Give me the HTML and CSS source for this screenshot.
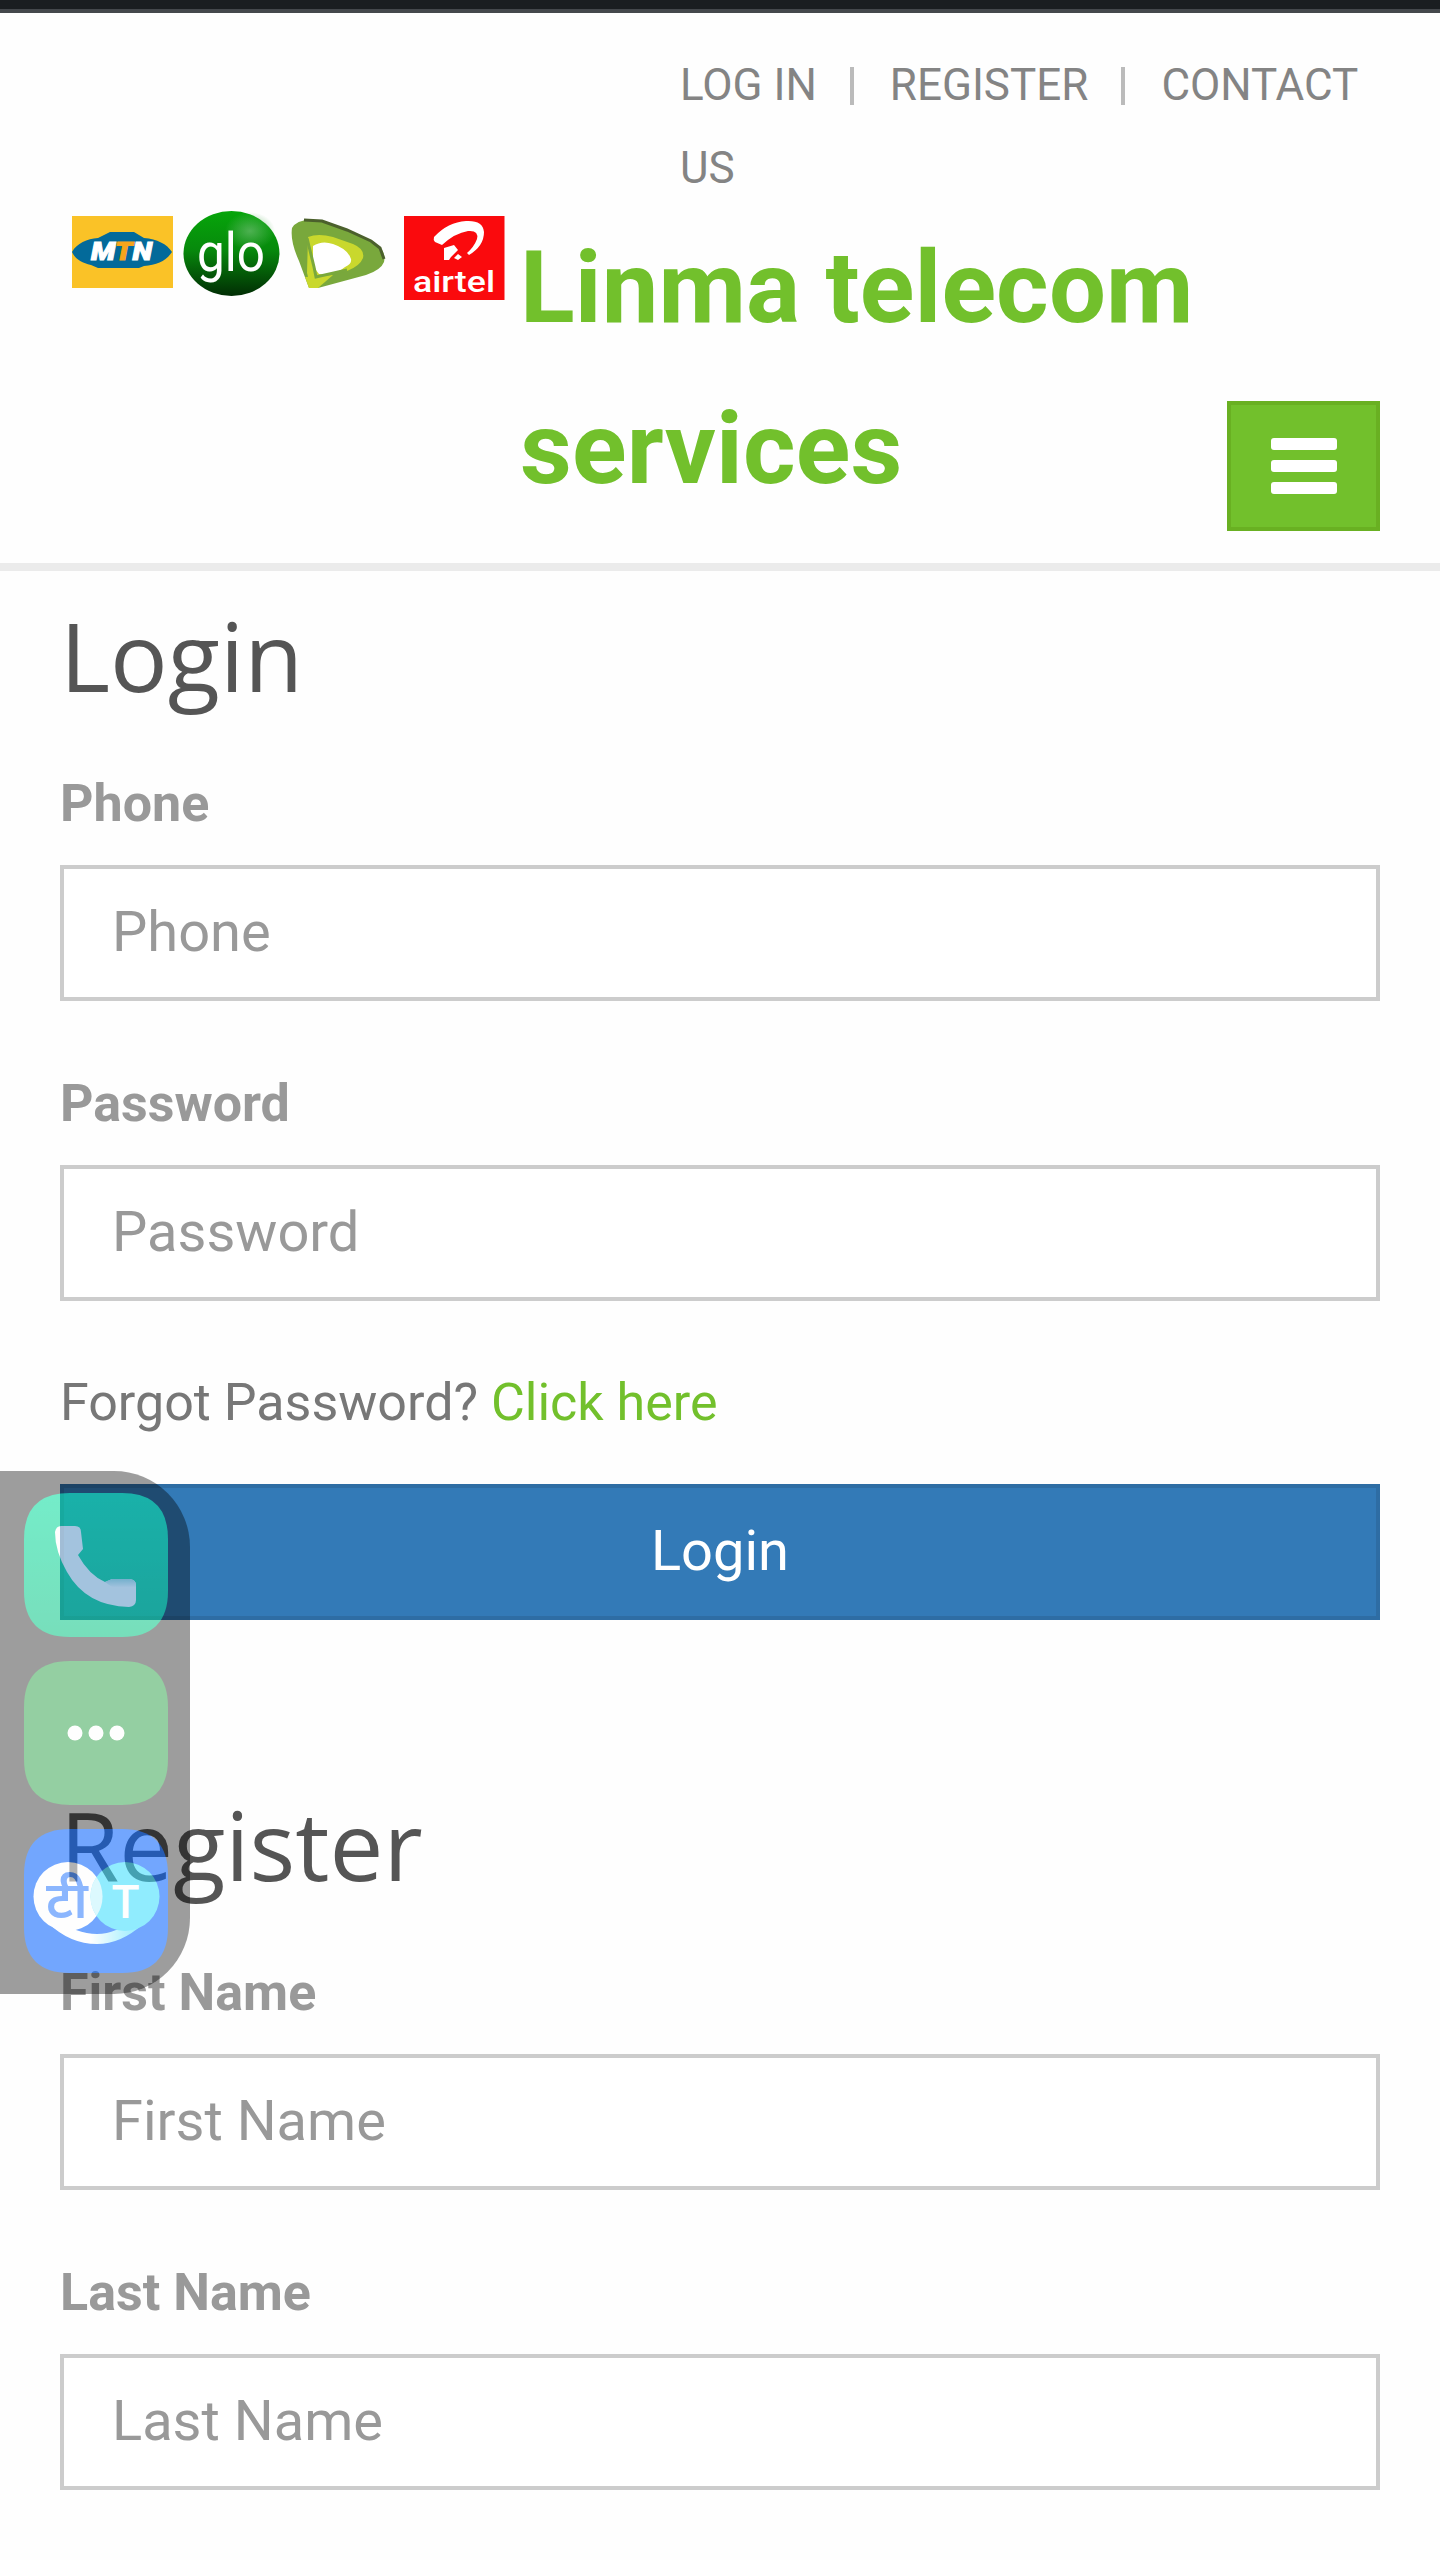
FILE: index.html
```html
<!DOCTYPE html>
<html lang="en">
<head>
<meta charset="utf-8">
<title>Linma telecom services</title>
<link rel="stylesheet" href="styles.css">
</head>
<body>
<div class="status-strip"></div>
<header class="header">
  <nav class="top-links"><a>LOG IN</a><span class="sep"></span><a>REGISTER</a><span class="sep"></span><a>CONTACT US</a></nav>
  <div class="brand-row">
    <svg class="logos" viewBox="60 208 460 100" aria-label="MTN glo etisalat airtel">
      <defs>
        <linearGradient id="glo" x1="0" y1="0" x2="0" y2="1"><stop offset="0" stop-color="#06a50a"/><stop offset=".45" stop-color="#078a0c"/><stop offset="1" stop-color="#012d04"/></linearGradient>
        <radialGradient id="shine"><stop offset="0" stop-color="#5fb763" stop-opacity=".8"/><stop offset="1" stop-color="#5fb763" stop-opacity="0"/></radialGradient>
      </defs>
      <rect x="72" y="216" width="101" height="72" fill="#fac227"/>
      <path d="M72 252c5-9 15-13 26-14l12-6h24l10 6c13 1 23 6 28 14-6 9-15 13-28 14l-5 2H98l-7-3c-9-2-16-6-19-13z" fill="#036a9a"/>
      <text class="mtn" x="91" y="260" textLength="61" lengthAdjust="spacingAndGlyphs">M<tspan fill="#f5a51c">T</tspan>N</text>
      <ellipse cx="231.500" cy="253.500" rx="48" ry="42.500" fill="url(#glo)"/>
      <ellipse cx="250" cy="231" rx="25" ry="19" fill="url(#shine)"/>
      <text class="glo" x="197" y="271" textLength="68" lengthAdjust="spacingAndGlyphs">glo</text>
      <path d="M292 228q5-9 21-8l14 3 31 11 20 12q8 6 6 16-3 8-18 13l-48 13h-9l-10-27q-9-20-7-33z" fill="#79a83c"/>
      <path d="M304 220l18 1 25 9 24 11 9 7 4 11" fill="none" stroke="#4b602c" stroke-width="3"/>
      <path d="M308 237q10-4 25 0l20 7q12 5 10 14-3 8-16 13l-20 3-9 14h-7l-4-15z" fill="#c9d82d"/>
      <path d="M305 277l28-2-15 13h-9z" fill="#c9d82d"/>
      <path d="M313 246q9-6 20-2 15 5 18 15 1 5-6 8-10 9-26 7-6-7-6-14z" fill="#fff"/>
      <path d="M307 238l7 29 2 10 31-7" fill="none" stroke="#79a83c" stroke-width="3"/>
      <rect x="404" y="216" width="100.500" height="84" fill="#fa0a0d"/>
      <path d="M435 242l7 3q13-12 26-14 11-1 9 8-3 8-10 14l2 2q15-9 15-23-1-12-18-11-18 1-32 16-1 3 1 5z" fill="#fff"/>
      <path d="M444 248l10-3 4 5-7 7-2 3h-5z M458 254l4 3-4 3-4-2z" fill="#fff"/>
      <text class="airtel" x="413" y="292" textLength="82" lengthAdjust="spacingAndGlyphs">airtel</text>
    </svg>
    <div class="brand">Linma telecom services</div>
    <button class="menu" aria-label="Menu"><i></i><i></i><i></i></button>
  </div>
</header>
<main class="main">
  <section>
    <h1>Login</h1>
    <label>Phone</label>
    <input type="text" placeholder="Phone">
    <label>Password</label>
    <input type="text" placeholder="Password">
    <p class="forgot">Forgot Password? <a>Click here</a></p>
    <button class="submit">Login</button>
  </section>
  <section class="register">
    <h1>Register</h1>
    <label>First Name</label>
    <input type="text" placeholder="First Name">
    <label>Last Name</label>
    <input type="text" placeholder="Last Name">
  </section>
</main>
<aside class="dock">
  <svg class="app" viewBox="0 0 144 144">
    <defs>
      <linearGradient id="call" x1="0" y1="0" x2="0" y2="1"><stop offset="0" stop-color="#05df9f"/><stop offset="1" stop-color="#0ac585"/></linearGradient>
      <linearGradient id="ear" x1="0" y1="0" x2="0" y2="1"><stop offset="0" stop-color="#a8dcdf"/><stop offset=".6" stop-color="#fff"/></linearGradient>
    </defs>
    <path d="M0 46Q0 0 46 0h52q46 0 46 46v52q0 46-46 46H46Q0 144 0 98z" fill="url(#call)"/>
    <path d="M54 62q11 20 27 27l7-3h18q6 1 6 6v15q0 6-7 7-43-1-62-35Q31 58 31 39q1-6 6-6h14q6 0 6 6l2 17z" fill="#fff"/>
    <path d="M81 89l7-3h18q6 1 6 6v8q-20-1-31-11z" fill="url(#ear)"/>
  </svg>
  <svg class="app" viewBox="0 0 144 144">
    <path d="M0 46Q0 0 46 0h52q46 0 46 46v52q0 46-46 46H46Q0 144 0 98z" fill="#3fa957"/>
    <g fill="#fff"><circle cx="51" cy="72" r="7.500"/><circle cx="72" cy="72" r="7.500"/><circle cx="93" cy="72" r="7.500"/></g>
  </svg>
  <svg class="app" viewBox="0 0 144 144">
    <defs><linearGradient id="swoosh"><stop offset="0" stop-color="#fff"/><stop offset=".45" stop-color="#fff"/><stop offset="1" stop-color="#38deff"/></linearGradient></defs>
    <path d="M0 46Q0 0 46 0h52q46 0 46 46v52q0 46-46 46H46Q0 144 0 98z" fill="#0060ff"/>
    <path d="M24 94q22 21 49 21 24 0 46-20l-27 6q-18 8-40 0z" fill="url(#swoosh)"/>
    <circle cx="44" cy="67.500" r="34.500" fill="#fff"/>
    <circle cx="101" cy="67.500" r="34.500" fill="#38deff"/>
    <path d="M72.500 48a34.500 34.500 0 0 1 0 39 34.500 34.500 0 0 1 0-39z" fill="#c2f5ff"/>
    <text class="hindi" x="43" y="89">टी</text>
    <text class="latin" x="101.500" y="89">T</text>
  </svg>
</aside>
</body>
</html>
```
FILE: styles.css
```css
* { box-sizing: border-box; }
body { margin: 0; height: 2560px; overflow: hidden; position: relative; background: #fefefe; font-family: Roboto, sans-serif; color: #777; }
.status-strip { height: 13px; background: #1a1e21; border-bottom: 4px solid #44484c; }
.header { height: 558px; border-bottom: 8px solid #ebebeb; padding-top: 31px; }
.top-links { margin: 0 60px 0 680px; height: 164px; font-size: 44px; line-height: 83px; color: #848484; }
.sep { display: inline-block; width: 4px; height: 38px; background: #bbb; margin: 0 36px 0 33px; vertical-align: -5px; }
.brand-row { display: flex; align-items: flex-start; padding: 0 60px; height: 323px; }
.logos { flex: none; width: 460px; height: 100px; }
.brand { flex: 1; font-size: 101px; font-weight: 700; line-height: 161px; letter-spacing: .15px; margin-top: -1px; color: #72c02c; }
.menu { align-self: flex-end; width: 153px; height: 130px; padding: 0; border: 4px solid #69b022; background: #72c02c; display: flex; flex-direction: column; gap: 10px; align-items: center; justify-content: center; }
.menu i { width: 66px; height: 12px; background: #fff; border-radius: 3px; }
.main { padding: 31px 60px 0; }
h1 { margin: 0 0 56px; font: 400 96px/106px "Open Sans", sans-serif; color: #555; }
label { display: block; font-size: 52px; font-weight: 700; line-height: 80px; color: #999; margin-bottom: 21px; }
input { display: block; width: 100%; height: 136px; border: 4px solid #ccc; padding: 0 48px 2px; margin: 0 0 63px; background: #fff; font: 56px Roboto, sans-serif; }
input::placeholder { color: #999; opacity: 1; }
.forgot { margin: -1px 0 41px; font-size: 52px; line-height: 80px; }
.forgot a { color: #72c02c; }
.submit { display: block; width: 100%; height: 136px; padding: 0 0 2px; border: 4px solid #2e6da4; background: #337ab7; color: #fff; font: 56px Roboto, sans-serif; }
.register { margin-top: 171px; }
.dock { position: absolute; left: 0; top: 1471px; width: 190px; height: 523px; padding: 22px 0 0 24px; border-radius: 0 76px 76px 0; background: rgba(0,0,0,.69); opacity: .55; display: flex; flex-direction: column; gap: 24px; }
.app { display: block; width: 144px; height: 144px; flex: none; }
.mtn { font: 900 italic 25px Roboto, sans-serif; fill: #fff; stroke: #fff; stroke-width: 1px; }
.mtn tspan { stroke: #f5a51c; }
.glo { font: 400 54px Roboto, sans-serif; fill: #fff; }
.airtel { font: 500 29px Roboto, sans-serif; fill: #fff; }
.hindi { font: 600 52px "Noto Sans", "Noto Sans Devanagari", sans-serif; fill: #2f7dff; text-anchor: middle; }
.latin { font: 500 46px Roboto, sans-serif; fill: #fff; text-anchor: middle; }
```
